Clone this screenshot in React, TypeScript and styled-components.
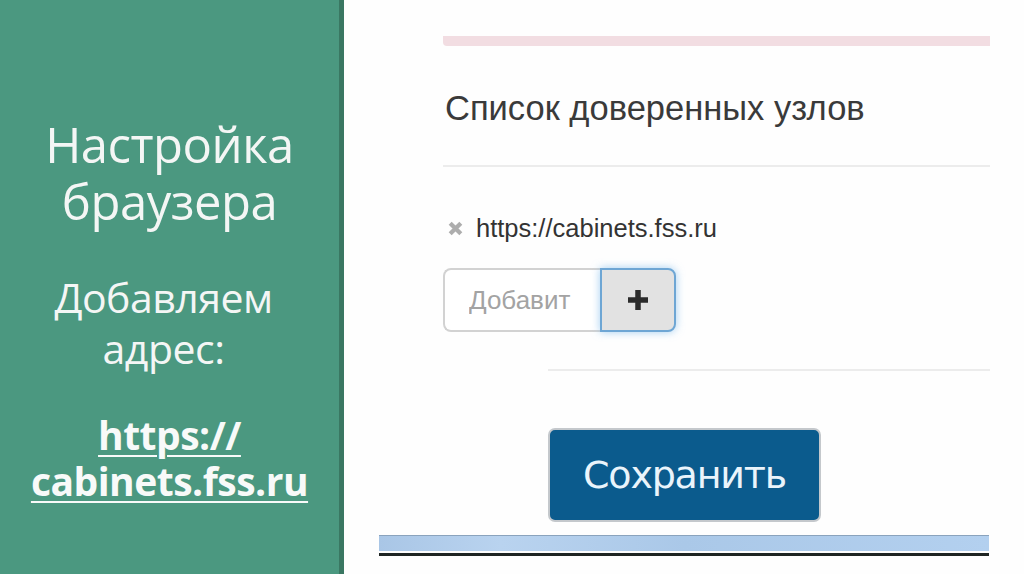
import React from "react";
import styled, { createGlobalStyle } from "styled-components";

const Global = createGlobalStyle`
  html, body { margin: 0; padding: 0; background: #fff; }
  #root { width: 1024px; height: 574px; overflow: hidden; }
`;

const Page = styled.div`
  display: flex;
  width: 1024px;
  height: 574px;
  background: #fefefe;
`;

const Side = styled.aside`
  width: 339px;
  flex: none;
  background: #4b9880;
  border-right: 5px solid #3a7762;
  box-sizing: content-box;
  display: flex;
  flex-direction: column;
  align-items: center;
  color: #f4f6f5;
  font-family: "Open Sans", "Noto Sans", sans-serif;
  text-align: center;
  padding-top: 116px;
`;

const Title = styled.h1`
  margin: 0;
  font-weight: 400;
  font-size: 49px;
  line-height: 57px;
  letter-spacing: -0.5px;
`;

const Sub = styled.p`
  margin: 42px 0 0;
  font-size: 41px;
  line-height: 51px;
  letter-spacing: -0.5px;
  padding-right: 12px;
`;

const Link = styled.a`
  margin-top: 38px;
  display: block;
  color: #f8faf9;
  font-weight: 700;
  font-size: 39px;
  line-height: 46px;
  letter-spacing: -0.5px;
  text-decoration: underline;
  text-decoration-thickness: 2px;
  text-underline-offset: 5px;
`;

const Main = styled.main`
  flex: 1;
  display: flex;
  flex-direction: column;
  padding: 36px 34px 0 35px;
  font-family: "Liberation Sans", Arial, sans-serif;
  color: #333;
`;

const Content = styled.div`
  display: flex;
  flex-direction: column;
  padding-left: 64px;
`;

const AlertEdge = styled.div`
  height: 10px;
  background: #f2dde2;
  border-bottom-left-radius: 4px;
`;

const Heading = styled.h2`
  margin: 41px 0 0;
  font-weight: 400;
  font-size: 34.5px;
  line-height: 42px;
  color: #3a3a3a;
  padding-left: 2px;
`;

const Rule = styled.hr<{ $indent?: number }>`
  border: 0;
  height: 2px;
  background: #ececec;
  margin: ${(p) => (p.$indent ? 37 : 36)}px 0 0 ${(p) => p.$indent ?? 0}px;
`;

const Item = styled.div`
  display: flex;
  align-items: center;
  gap: 11px;
  margin-top: 46px;
  font-size: 25.5px;
  line-height: 30px;
  color: #333;
  padding-left: 2px;
`;

const Remove = styled.span`
  display: inline-flex;
  width: 20px;
  justify-content: center;
  color: #b0b0b0;
`;

const Group = styled.div`
  display: flex;
  margin-top: 25px;
  height: 64px;
`;

const Field = styled.input`
  width: 157px;
  box-sizing: border-box;
  border: 2px solid #d2d2d2;
  border-right: 0;
  border-radius: 8px 0 0 8px;
  padding: 0 0 0 24px;
  font-family: "Liberation Sans", Arial, sans-serif;
  font-size: 26px;
  color: #333;
  background: #fff;
  outline: none;
  &::placeholder { color: #a3a3a3; }
`;

const AddButton = styled.button`
  width: 76px;
  box-sizing: border-box;
  background: #e2e2e2;
  border: 2px solid #6ea6d4;
  border-radius: 0 8px 8px 0;
  box-shadow: 0 0 8px rgba(102, 175, 233, 0.6);
  display: flex;
  align-items: center;
  justify-content: center;
  padding: 0;
`;

const SaveButton = styled.button`
  align-self: flex-start;
  margin: 57px 0 0 105px;
  width: 273px;
  height: 94px;
  box-sizing: border-box;
  background: #0b5b8d;
  border: 2px solid #c4c8cc;
  border-radius: 7px;
  color: #eaf4fb;
  font-family: "DejaVu Sans", Verdana, sans-serif;
  font-size: 38px;
  letter-spacing: -1.2px;
  padding: 0 0 0;
`;

const Footer = styled.div`
  margin-top: 13px;
  width: 610px;
  display: flex;
  flex-direction: column;
`;

const FooterBar = styled.div`
  height: 15px;
  background: linear-gradient(90deg, #a9c6e6 0%, #b9d3ef 20%, #aac8e8 50%, #b3d0ef 100%);
  border-top: 1px solid #8aa3bd;
`;

const FooterLine = styled.div`
  height: 3px;
  margin-top: 2px;
  background: #1f2523;
`;

export default function App() {
  return (
    <Page>
      <Global />
      <Side>
        <Title>
          Настройка
          <br />
          браузера
        </Title>
        <Sub>
          Добавляем
          <br />
          адрес:
        </Sub>
        <Link href="#">
          https://
          <br />
          cabinets.fss.ru
        </Link>
      </Side>
      <Main>
        <Content>
          <AlertEdge />
          <Heading>Список доверенных узлов</Heading>
          <Rule />
          <Item>
            <Remove>
              <svg width="17" height="17" viewBox="0 0 16 16">
                <path d="M3 3 L13 13 M13 3 L3 13" stroke="#adadad" strokeWidth="4" strokeLinecap="butt" />
              </svg>
            </Remove>
            https://cabinets.fss.ru
          </Item>
          <Group>
            <Field placeholder="Добавит" />
            <AddButton aria-label="Добавить">
              <svg width="24" height="24" viewBox="0 0 24 24">
                <path d="M12 2 V22 M2 12 H22" stroke="#2b2b2b" strokeWidth="5.5" />
              </svg>
            </AddButton>
          </Group>
          <Rule $indent={105} />
          <SaveButton>Сохранить</SaveButton>
        </Content>
        <Footer>
          <FooterBar />
          <FooterLine />
        </Footer>
      </Main>
    </Page>
  );
}
